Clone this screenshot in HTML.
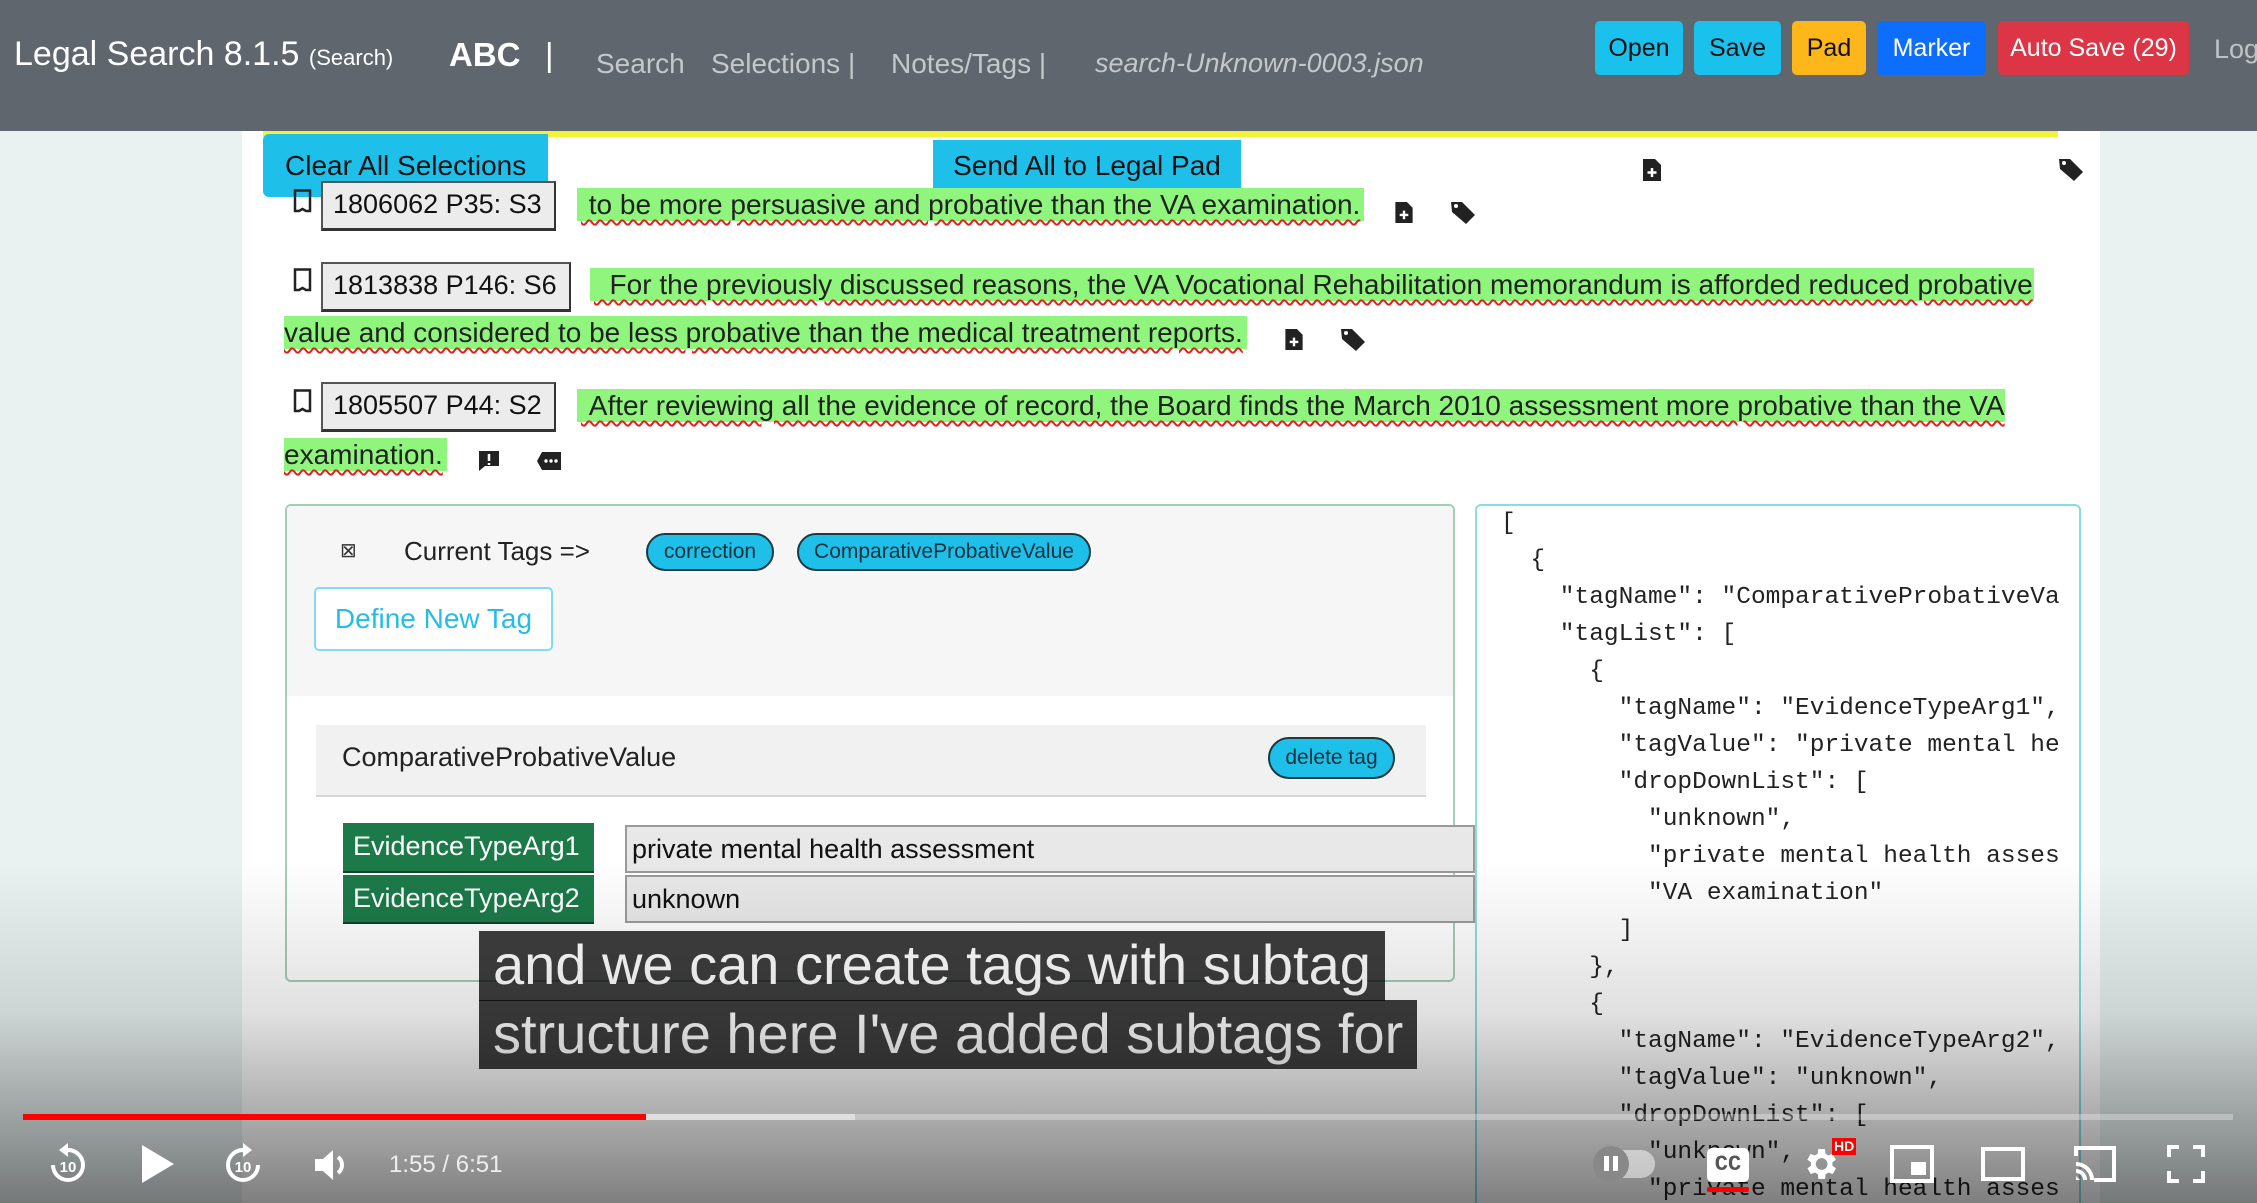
<!DOCTYPE html>
<html><head><meta charset="utf-8">
<style>
*{margin:0;padding:0;box-sizing:border-box}
html{width:2257px;height:1203px;overflow:hidden}
body{width:2257px;height:1203px;overflow:hidden;position:relative;background:#e9f1f1;font-family:"Liberation Sans",sans-serif}
.a{position:absolute;white-space:nowrap}
.hdr{left:0;top:0;width:2257px;height:131px;background:#5f666d}
.btn{position:absolute;top:21px;height:54px;border-radius:5px;font-size:25px;line-height:54px;text-align:center}
.hl{background:#8ff57c;color:#222;font-size:28px;text-decoration:underline wavy #e02020;text-decoration-thickness:2px;text-underline-offset:5px;height:33px;line-height:33px;padding:0 4px}
.box{background:#ececec;border:2px solid #555;border-right-color:#333;border-bottom:3px solid #333;font-size:27px;line-height:42px;padding:0 10px;color:#111}
.pill{background:#1ec0ea;border:2px solid #1d3a40;border-radius:22px;font-size:21px;line-height:34px;text-align:center;color:#12313a}
.mono{font-family:"Liberation Mono",monospace;font-size:24.5px;color:#222;line-height:37px}
.glab{background:#1c7a49;color:#fff;font-size:27px;line-height:47px;padding-left:10px;border-bottom:2px solid #0e4427}
.inp{background:#e8e8e8;border:2px solid #9a9a9a;font-size:27px;line-height:44px;padding-left:5px;color:#111}
.sub{background:rgba(8,8,8,.78);color:#fff;font-size:56px;line-height:68px;padding:0 14px}
</style></head><body>
<div class="a hdr"></div>
<div class="a" style="left:14px;top:35px;color:#fff;font-size:34px">Legal Search 8.1.5 <span style="font-size:22px">(Search)</span></div>
<div class="a" style="left:449px;top:36px;color:#fff;font-size:33px;font-weight:bold">ABC</div>
<div class="a" style="left:545px;top:36px;color:#fff;font-size:33px">|</div>
<div class="a" style="left:596px;top:48px;color:#c4c8cb;font-size:28px">Search</div>
<div class="a" style="left:711px;top:48px;color:#c4c8cb;font-size:28px">Selections |</div>
<div class="a" style="left:891px;top:48px;color:#c4c8cb;font-size:28px">Notes/Tags |</div>
<div class="a" style="left:1095px;top:48px;color:#c4c8cb;font-size:27px;font-style:italic">search-Unknown-0003.json</div>
<div class="btn" style="left:1595px;width:88px;background:#19c1ec;color:#111">Open</div>
<div class="btn" style="left:1694px;width:87px;background:#19c1ec;color:#111">Save</div>
<div class="btn" style="left:1792px;width:74px;background:#fdb71a;color:#111">Pad</div>
<div class="btn" style="left:1877px;width:109px;background:#0d6efd;color:#fff">Marker</div>
<div class="btn" style="left:1998px;width:191px;background:#dc3545;color:#fff">Auto Save (29)</div>
<div class="a" style="left:2214px;top:34px;color:#bfc3c6;font-size:27px">Log</div>

<div class="a" style="left:242px;top:131px;width:1858px;height:1072px;background:#fff"></div>
<div class="a" style="left:263px;top:131px;width:1795px;height:6px;background:#f2f23a"></div>
<div class="a" style="left:263px;top:134px;width:285px;height:63px;background:#1ec0ea;border-radius:6px 0 0 6px;font-size:28px;line-height:64px;padding-left:22px;color:#111">Clear All Selections</div>
<div class="a" style="left:933px;top:140px;width:308px;height:52px;background:#1ec0ea;font-size:28px;line-height:52px;text-align:center;color:#111">Send All to Legal Pad</div>
<svg class="a" style="left:1642px;top:158px" width="20" height="24" viewBox="0 0 20 24"><path d="M1 1h12l6 6v16H1z" fill="#222"/><path d="M10 10v9M5.5 14.5h9" stroke="#fff" stroke-width="2.5"/></svg>
<svg class="a" style="left:2058px;top:157px" width="26" height="26" viewBox="0 0 26 26"><path d="M1 2h11l13 13-9 9L2 12z" fill="#222"/><circle cx="6" cy="6" r="2" fill="#fff"/></svg>

<!-- row1 -->
<svg class="a" style="left:293px;top:189px" width="20" height="24" viewBox="0 0 20 24"><path d="M2 1.5h15v20.5h-4l-3.5-2-3.5 2H2z" fill="none" stroke="#222" stroke-width="2.5"/></svg>
<div class="a box" style="left:321px;top:181px;width:235px;height:50px">1806062 P35: S3</div>
<div class="a hl" style="left:577px;top:188px">&nbsp;to be more persuasive and probative than the VA examination.</div>
<svg class="a" style="left:1394px;top:201px" width="20" height="23" viewBox="0 0 20 24"><path d="M1 1h12l6 6v16H1z" fill="#222"/><path d="M10 10v9M5.5 14.5h9" stroke="#fff" stroke-width="2.5"/></svg>
<svg class="a" style="left:1450px;top:200px" width="26" height="26" viewBox="0 0 26 26"><path d="M1 2h11l13 13-9 9L2 12z" fill="#222"/><circle cx="6" cy="6" r="2" fill="#fff"/></svg>
<!-- row2 -->
<svg class="a" style="left:293px;top:268px" width="20" height="24" viewBox="0 0 20 24"><path d="M2 1.5h15v20.5h-4l-3.5-2-3.5 2H2z" fill="none" stroke="#222" stroke-width="2.5"/></svg>
<div class="a box" style="left:321px;top:262px;width:250px;height:50px">1813838 P146: S6</div>
<div class="a hl" style="left:590px;top:268px;width:1444px">&nbsp;&nbsp;For the previously discussed reasons, the VA Vocational Rehabilitation memorandum is afforded reduced probative</div>
<div class="a hl" style="left:284px;top:316px;padding-left:0">value and considered to be less probative than the medical treatment reports.</div>
<svg class="a" style="left:1284px;top:328px" width="20" height="23" viewBox="0 0 20 24"><path d="M1 1h12l6 6v16H1z" fill="#222"/><path d="M10 10v9M5.5 14.5h9" stroke="#fff" stroke-width="2.5"/></svg>
<svg class="a" style="left:1340px;top:327px" width="26" height="26" viewBox="0 0 26 26"><path d="M1 2h11l13 13-9 9L2 12z" fill="#222"/><circle cx="6" cy="6" r="2" fill="#fff"/></svg>
<!-- row3 -->
<svg class="a" style="left:293px;top:389px" width="20" height="24" viewBox="0 0 20 24"><path d="M2 1.5h15v20.5h-4l-3.5-2-3.5 2H2z" fill="none" stroke="#222" stroke-width="2.5"/></svg>
<div class="a box" style="left:321px;top:382px;width:235px;height:50px">1805507 P44: S2</div>
<div class="a hl" style="left:577px;top:389px;width:1428px">&nbsp;After reviewing all the evidence of record, the Board finds the March 2010 assessment more probative than the VA</div>
<div class="a hl" style="left:284px;top:438px;padding-left:0">examination.</div>
<svg class="a" style="left:478px;top:450px" width="22" height="22" viewBox="0 0 22 22"><path d="M1 1h20v15H7l-6 5z" fill="#222"/><path d="M11 4v7M11 13v2" stroke="#fff" stroke-width="2.5"/></svg>
<svg class="a" style="left:536px;top:451px" width="26" height="20" viewBox="0 0 26 20"><path d="M6 1h19v18H6L1 10z" fill="#222"/><circle cx="10" cy="10" r="1.7" fill="#fff"/><circle cx="15" cy="10" r="1.7" fill="#fff"/><circle cx="20" cy="10" r="1.7" fill="#fff"/></svg>

<!-- tag panel -->
<div class="a" style="left:285px;top:504px;width:1170px;height:478px;border:2px solid #a4cdb7;border-radius:6px;background:#fff;overflow:hidden">
 <div class="a" style="left:0;top:0;width:1170px;height:190px;background:#f6f6f6"></div>
 <div class="a" style="left:29px;top:219px;width:1110px;height:72px;background:#f1f1f1;border-bottom:2px solid #d6d6d6"></div>
</div>
<div class="a" style="left:340px;top:538px;font-size:20px;color:#333">⊠</div>
<div class="a" style="left:404px;top:536px;font-size:26px;color:#222">Current Tags =&gt;</div>
<div class="a pill" style="left:646px;top:533px;width:128px;height:38px">correction</div>
<div class="a pill" style="left:797px;top:533px;width:294px;height:38px">ComparativeProbativeValue</div>
<div class="a" style="left:314px;top:587px;width:239px;height:64px;border:2px solid #7fdcf2;border-radius:5px;background:#fff;color:#25bde6;font-size:28px;line-height:60px;text-align:center">Define New Tag</div>
<div class="a" style="left:342px;top:742px;font-size:27px;color:#222;font-weight:500">ComparativeProbativeValue</div>
<div class="a pill" style="left:1268px;top:737px;width:127px;height:42px;line-height:38px">delete tag</div>
<div class="a glab" style="left:343px;top:823px;width:251px;height:50px">EvidenceTypeArg1</div>
<div class="a glab" style="left:343px;top:875px;width:251px;height:49px">EvidenceTypeArg2</div>
<div class="a inp" style="left:625px;top:825px;width:850px;height:48px">private mental health assessment</div>
<div class="a inp" style="left:625px;top:875px;width:850px;height:48px">unknown</div>

<!-- json panel -->
<div class="a" style="left:1475px;top:504px;width:606px;height:699px;border:2px solid #88dce4;border-bottom:none;border-radius:6px 6px 0 0;background:#fff;overflow:hidden">
<pre class="mono" style="position:absolute;left:24px;top:-1px">[
  {
    "tagName": "ComparativeProbativeVa
    "tagList": [
      {
        "tagName": "EvidenceTypeArg1",
        "tagValue": "private mental he
        "dropDownList": [
          "unknown",
          "private mental health asses
          "VA examination"
        ]
      },
      {
        "tagName": "EvidenceTypeArg2",
        "tagValue": "unknown",
        "dropDownList": [
          "unknown",
          "private mental health asses</pre>
</div>

<!-- subtitles -->
<div class="a sub" style="left:479px;top:931px;height:70px">and we can create tags with subtag</div>
<div class="a sub" style="left:479px;top:1000px;height:69px">structure here I've added subtags for</div>

<!-- player gradient -->
<div class="a" style="left:0;top:860px;width:2257px;height:343px;background:linear-gradient(rgba(0,0,0,0),rgba(0,0,0,.12) 45%,rgba(0,0,0,.5))"></div>
<div class="a" style="left:23px;top:1114px;width:2210px;height:6px;background:rgba(255,255,255,.3)"></div>
<div class="a" style="left:23px;top:1114px;width:832px;height:6px;background:rgba(255,255,255,.45)"></div>
<div class="a" style="left:23px;top:1114px;width:623px;height:6px;background:#f00"></div>

<svg class="a" style="left:44px;top:1140px" width="48" height="48" viewBox="0 0 48 48"><path d="M24 10a15 15 0 1 1-15 15" fill="none" stroke="#fff" stroke-width="4"/><path d="M24 3v14l-9-7z" fill="#fff"/><text x="24" y="32" font-family="Liberation Sans" font-size="15" font-weight="bold" fill="#fff" text-anchor="middle">10</text></svg>
<svg class="a" style="left:140px;top:1143px" width="36" height="42" viewBox="0 0 36 42"><path d="M2 2l32 19L2 40z" fill="#fff"/></svg>
<svg class="a" style="left:219px;top:1140px" width="48" height="48" viewBox="0 0 48 48"><path d="M24 10a15 15 0 1 0 15 15" fill="none" stroke="#fff" stroke-width="4"/><path d="M24 3v14l9-7z" fill="#fff"/><text x="24" y="32" font-family="Liberation Sans" font-size="15" font-weight="bold" fill="#fff" text-anchor="middle">10</text></svg>
<svg class="a" style="left:312px;top:1145px" width="40" height="40" viewBox="0 0 40 40"><path d="M3 14h8l10-9v30l-10-9H3z" fill="#fff"/><path d="M26 12a10 10 0 0 1 0 16" fill="none" stroke="#fff" stroke-width="4"/></svg>
<div class="a" style="left:389px;top:1151px;color:#eee;font-size:24px">1:55 / 6:51</div>

<div class="a" style="left:1595px;top:1150px;width:60px;height:28px;border-radius:14px;background:rgba(255,255,255,.5)"></div>
<div class="a" style="left:1593px;top:1146px;width:36px;height:36px;border-radius:18px;background:#888"></div>
<div class="a" style="left:1604px;top:1156px;width:5px;height:15px;background:#fff;box-shadow:9px 0 0 #fff"></div>
<div class="a" style="left:1707px;top:1148px;width:42px;height:34px;border-radius:5px;background:#fff;color:#555;font-weight:bold;font-size:22px;line-height:34px;text-align:center;font-family:'Liberation Mono',monospace">CC</div>
<div class="a" style="left:1707px;top:1187px;width:42px;height:5px;background:#f00;border-radius:2px"></div>
<svg class="a" style="left:1800px;top:1144px" width="40" height="40" viewBox="0 0 24 24"><path fill="#fff" d="M19.4 13a7.5 7.5 0 0 0 0-2l2.1-1.6-2-3.5-2.5 1a7 7 0 0 0-1.7-1L15 3h-4l-.4 2.9a7 7 0 0 0-1.7 1l-2.5-1-2 3.5L6.6 11a7.5 7.5 0 0 0 0 2l-2.1 1.6 2 3.5 2.5-1a7 7 0 0 0 1.7 1L11 21h4l.4-2.9a7 7 0 0 0 1.7-1l2.5 1 2-3.5zM13 15.5a3.5 3.5 0 1 1 0-7 3.5 3.5 0 0 1 0 7z"/></svg>
<div class="a" style="left:1832px;top:1138px;background:#f00;color:#fff;font-size:14px;font-weight:bold;padding:0 2px;line-height:17px">HD</div>
<svg class="a" style="left:1889px;top:1144px" width="46" height="40" viewBox="0 0 46 40"><rect x="3" y="3" width="40" height="34" fill="none" stroke="#fff" stroke-width="4"/><rect x="22" y="18" width="15" height="13" fill="#fff"/></svg>
<svg class="a" style="left:1980px;top:1146px" width="46" height="36" viewBox="0 0 46 36"><rect x="3" y="3" width="40" height="30" fill="none" stroke="#fff" stroke-width="4"/></svg>
<svg class="a" style="left:2072px;top:1144px" width="46" height="40" viewBox="0 0 46 40"><path d="M4 12V4h38v32H22" fill="none" stroke="#fff" stroke-width="4"/><path d="M4 20a16 16 0 0 1 16 16M4 27a9 9 0 0 1 9 9" fill="none" stroke="#fff" stroke-width="4"/><path d="M4 32v4h4z" fill="#fff"/></svg>
<svg class="a" style="left:2166px;top:1144px" width="40" height="40" viewBox="0 0 40 40"><path d="M3 13V3h10M27 3h10v10M37 27v10H27M13 37H3V27" fill="none" stroke="#fff" stroke-width="4"/></svg>
</body></html>
